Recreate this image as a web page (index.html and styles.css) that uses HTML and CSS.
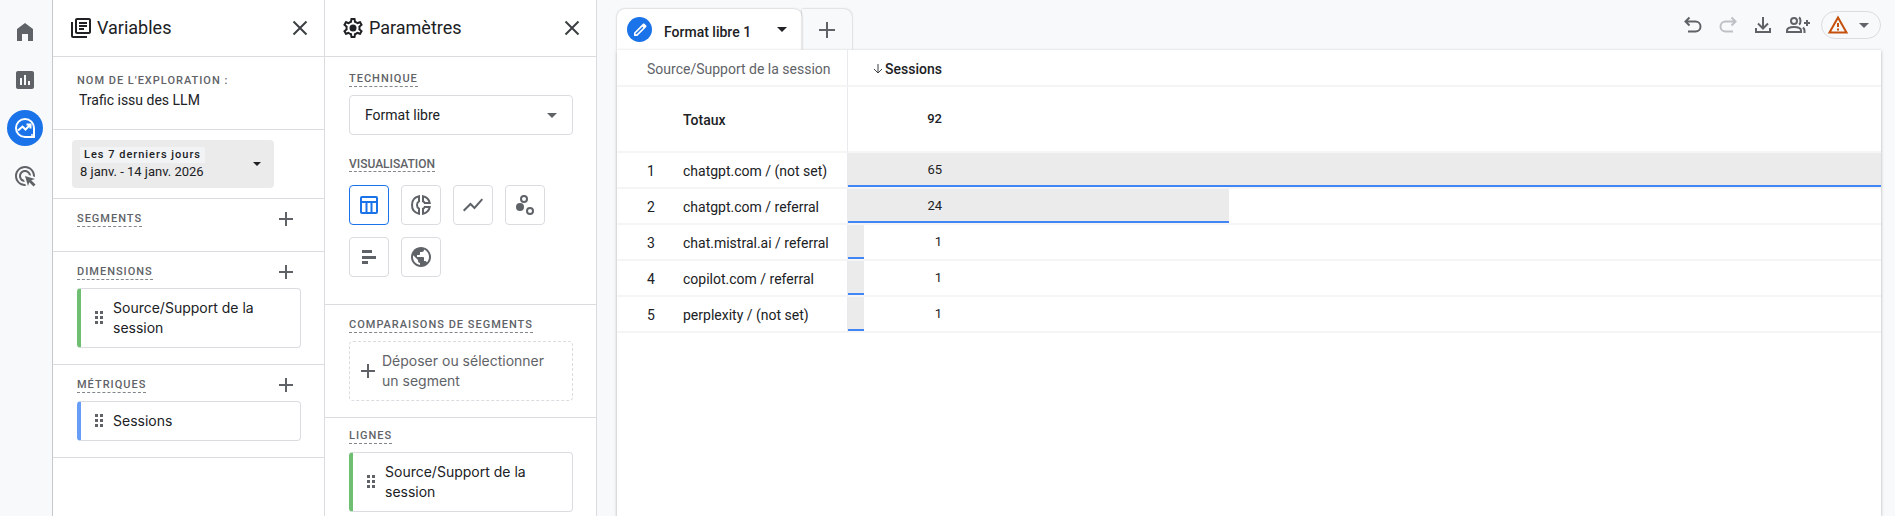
FILE: index.html
```html
<!DOCTYPE html>
<html lang="fr">
  <head>
    <meta charset="UTF-8" />
    <meta name="viewport" content="width=device-width, initial-scale=1.0" />
    <title>Trafic issu des LLM</title>
    <link rel="stylesheet" href="styles.css">
  </head>
  <body>
    <nav class="rail">
      <a href="#" class="rail-link" aria-label="Accueil">
        <svg class="icon" viewBox="0 0 24 24"><path d="M4 21V9l8-6 8 6v12h-5v-7H9v7z"/></svg>
      </a>
      <a href="#" class="rail-link" aria-label="Rapports">
        <svg class="icon" viewBox="0 0 24 24"><path d="M19 3H5c-1.1 0-2 .9-2 2v14c0 1.1.9 2 2 2h14c1.1 0 2-.9 2-2V5c0-1.1-.9-2-2-2zM9 17H7v-7h2v7zm4 0h-2V7h2v10zm4 0h-2v-4h2v4z"/></svg>
      </a>
      <a href="#" class="rail-link active" aria-label="Explorer">
        <svg class="icon line" viewBox="0 0 24 24"><path d="M12 3a9 9 0 1 0 0 18h9v-9a9 9 0 0 0-9-9z"/><path d="M5 14.500l4.500-4 3 3L17 9M13.500 8.500H17.500V12.500"/><circle class="solid" cx="19" cy="19" r="1"/></svg>
      </a>
      <a href="#" class="rail-link" aria-label="Publicité">
        <svg class="icon" viewBox="0 0 24 24"><path d="M11.710 17.990C8.530 17.840 6 15.220 6 12c0-3.310 2.690-6 6-6 3.220 0 5.840 2.530 5.990 5.710l-2.100-.63C15.480 9.310 13.890 8 12 8c-2.210 0-4 1.790-4 4 0 1.890 1.310 3.480 3.080 3.890l.63 2.100zM22 12c0 .3-.01.6-.04.9l-1.970-.59c.01-.1.01-.21.01-.31 0-4.420-3.580-8-8-8s-8 3.580-8 8 3.580 8 8 8c.1 0 .21 0 .31-.01l.59 1.970c-.3.03-.6.04-.9.04C6.480 22 2 17.520 2 12S6.480 2 12 2s10 4.480 10 10zm-3.770 4.260L22 15l-10-3 3 10 1.260-3.770 4.270 4.270 1.980-1.980-4.280-4.260z"/></svg>
      </a>
    </nav>

    <aside class="panel">
      <header class="panel-header">
        <svg class="icon" viewBox="0 0 24 24"><path d="M4 6H2v14c0 1.100.9 2 2 2h14v-2H4V6zm16-4H8c-1.100 0-2 .9-2 2v12c0 1.100.9 2 2 2h12c1.100 0 2-.9 2-2V4c0-1.100-.9-2-2-2zm0 14H8V4h12v12zM10 9h8v2h-8zm0 3h5v2h-5zm0-6h8v2h-8z"/></svg>
        <h2>Variables</h2>
        <button class="icon-btn" aria-label="Fermer Variables">
          <svg class="icon line" viewBox="0 0 24 24"><path d="M5.500 5.500l13 13M18.500 5.500l-13 13"/></svg>
        </button>
      </header>

      <section class="section name-section">
        <label class="label plain" for="name">Nom de l'exploration :</label>
        <input class="name-input" id="name" type="text" value="Trafic issu des LLM">
      </section>

      <section class="section date-section">
        <button class="date-picker">
          <span>
            <span class="date-preset">Les 7 derniers jours</span>
            <span class="date-range">8 janv. - 14 janv. 2026</span>
          </span>
          <span class="caret small"></span>
        </button>
      </section>

      <section class="section">
        <div class="section-header">
          <h3 class="label">Segments</h3>
          <button class="icon-btn" aria-label="Ajouter un segment">
            <svg class="icon line" viewBox="0 0 24 24"><path d="M12 5v14M5 12h14"/></svg>
          </button>
        </div>
      </section>

      <section class="section">
        <div class="section-header">
          <h3 class="label">Dimensions</h3>
          <button class="icon-btn" aria-label="Ajouter une dimension">
            <svg class="icon line" viewBox="0 0 24 24"><path d="M12 5v14M5 12h14"/></svg>
          </button>
        </div>
        <div class="chip dimension">
          <svg class="grip" viewBox="0 0 8 14"><path d="M0 0h3v3H0zM5 0h3v3H5zM0 5h3v3H0zM5 5h3v3H5zM0 10h3v3H0zM5 10h3v3H5z"/></svg>
          <span>Source/Support de la session</span>
        </div>
      </section>

      <section class="section">
        <div class="section-header">
          <h3 class="label">Métriques</h3>
          <button class="icon-btn" aria-label="Ajouter une métrique">
            <svg class="icon line" viewBox="0 0 24 24"><path d="M12 5v14M5 12h14"/></svg>
          </button>
        </div>
        <div class="chip metric">
          <svg class="grip" viewBox="0 0 8 14"><path d="M0 0h3v3H0zM5 0h3v3H5zM0 5h3v3H0zM5 5h3v3H5zM0 10h3v3H0zM5 10h3v3H5z"/></svg>
          <span>Sessions</span>
        </div>
      </section>
    </aside>

    <aside class="panel">
      <header class="panel-header">
        <svg class="icon" viewBox="0 0 24 24"><path d="M19.430 12.980c.04-.32.07-.64.07-.98 0-.34-.03-.66-.07-.98l2.110-1.650c.19-.15.24-.42.12-.64l-2-3.460c-.09-.16-.26-.25-.44-.25-.06 0-.12.01-.17.03l-2.490 1c-.52-.4-1.080-.73-1.690-.98l-.38-2.650C14.460 2.180 14.250 2 14 2h-4c-.25 0-.46.18-.49.42l-.38 2.650c-.61.25-1.170.59-1.690.98l-2.490-1c-.06-.02-.12-.03-.18-.03-.17 0-.34.09-.43.25l-2 3.460c-.13.22-.07.49.12.64l2.110 1.650c-.04.32-.07.65-.07.98 0 .33.03.66.07.98l-2.110 1.650c-.19.15-.24.42-.12.64l2 3.460c.09.16.26.25.44.25.06 0 .12-.01.17-.03l2.490-1c.52.4 1.080.73 1.690.98l.38 2.650c.03.24.24.42.49.42h4c.25 0 .46-.18.49-.42l.38-2.650c.61-.25 1.170-.59 1.690-.98l2.490 1c.06.02.12.03.18.03.17 0 .34-.09.43-.25l2-3.460c.12-.22.07-.49-.12-.64l-2.110-1.650zm-1.980-1.710c.04.31.05.52.05.73 0 .21-.02.43-.05.73l-.14 1.130.89.7 1.080.84-.7 1.210-1.270-.51-1.040-.42-.9.68c-.43.32-.84.56-1.250.73l-1.060.43-.16 1.130-.2 1.350h-1.400l-.19-1.350-.16-1.130-1.060-.43c-.43-.18-.83-.41-1.230-.71l-.91-.7-1.060.43-1.270.51-.7-1.210 1.080-.84.89-.7-.14-1.130c-.03-.31-.05-.54-.05-.74s.02-.43.05-.73l.14-1.130-.89-.7-1.080-.84.7-1.210 1.270.51 1.040.42.9-.68c.43-.32.84-.56 1.250-.73l1.060-.43.16-1.130.2-1.350h1.390l.19 1.350.16 1.130 1.060.43c.43.18.83.41 1.230.71l.91.7 1.060-.43 1.270-.51.7 1.210-1.070.85-.89.7.14 1.130z"/><circle cx="12" cy="12" r="3.500"/></svg>
        <h2>Paramètres</h2>
        <button class="icon-btn" aria-label="Fermer Paramètres">
          <svg class="icon line" viewBox="0 0 24 24"><path d="M5.500 5.500l13 13M18.500 5.500l-13 13"/></svg>
        </button>
      </header>

      <section class="section settings">
        <div class="section-header">
          <label class="label" for="technique">Technique</label>
        </div>
        <div class="select-wrap">
          <select id="technique">
            <option>Format libre</option>
          </select>
          <span class="caret"></span>
        </div>
        <div class="section-header visual-header">
          <h3 class="label tight">Visualisation</h3>
        </div>
        <div class="tiles">
          <button class="tile selected" aria-label="Tableau">
            <svg class="icon line" viewBox="0 0 24 24"><rect x="4" y="4" width="16" height="16" rx="1"/><path d="M4 9h16M9.500 9v11M14.500 9v11"/></svg>
          </button>
          <button class="tile" aria-label="Graphique en anneau">
            <svg class="icon line" viewBox="0 0 24 24"><path d="M10 3.300v5c-1.500.7-2 2-2 3.700s.5 3 2 3.700v5C6 19.900 3 16.700 3 12s3-7.900 7-8.700zM14 3.300c3.600.7 6 3.200 6.700 6.700h-5c-.3-.8-.9-1.400-1.700-1.700zM14 20.700c3.600-.7 6-3.200 6.700-6.700h-5c-.3.8-.9 1.400-1.700 1.700z"/></svg>
          </button>
          <button class="tile" aria-label="Graphique en courbes">
            <svg class="icon line" viewBox="0 0 24 24"><path d="M2.700 17.800l6.800-6.800 4 4 7.800-8.800"/></svg>
          </button>
          <button class="tile" aria-label="Nuage de points">
            <svg class="icon line" viewBox="0 0 24 24"><circle cx="11" cy="6" r="3"/><circle cx="17" cy="18" r="3"/><circle class="solid" cx="7" cy="14" r="4"/></svg>
          </button>
          <button class="tile" aria-label="Graphique à barres">
            <svg class="icon" viewBox="0 0 24 24"><path d="M5 5h10v3H5zM5 11h14v3H5zM5 16h6v3H5z"/></svg>
          </button>
          <button class="tile" aria-label="Carte géographique">
            <svg class="icon" viewBox="0 0 24 24"><path d="M12 2C6.480 2 2 6.480 2 12s4.480 10 10 10 10-4.480 10-10S17.520 2 12 2zm-1 17.930c-3.950-.49-7-3.850-7-7.930 0-.62.08-1.210.21-1.790L9 15v1c0 1.100.9 2 2 2v1.930zm6.900-2.540c-.26-.81-1-1.390-1.900-1.390h-1v-3c0-.55-.45-1-1-1H8v-2h2c.55 0 1-.45 1-1V7h2c1.100 0 2-.9 2-2v-.41c2.930 1.190 5 4.060 5 7.410 0 2.080-.8 3.970-2.100 5.390z"/></svg>
          </button>
        </div>
      </section>

      <section class="section">
        <div class="section-header">
          <h3 class="label">Comparaisons de segments</h3>
        </div>
        <button class="drop-zone">
          <svg class="icon line" viewBox="0 0 24 24"><path d="M12 5v14M5 12h14"/></svg>
          <span>Déposer ou sélectionner un segment</span>
        </button>
      </section>

      <section class="section rows-section">
        <div class="section-header">
          <h3 class="label">Lignes</h3>
        </div>
        <div class="chip dimension">
          <svg class="grip" viewBox="0 0 8 14"><path d="M0 0h3v3H0zM5 0h3v3H5zM0 5h3v3H0zM5 5h3v3H5zM0 10h3v3H0zM5 10h3v3H5z"/></svg>
          <span>Source/Support de la session</span>
        </div>
      </section>
    </aside>

    <main class="main">
      <div class="topbar">
        <button class="tab">
          <span class="tab-badge">
            <svg class="icon" viewBox="0 0 24 24"><path d="M3 21v-5L16 3c1-1 2-1 3 0l2 2c1 1 1 2 0 3L8 21zM5.500 18.500h1.500L17 8.500 15.500 7l-10 10z" fill-rule="evenodd"/></svg>
          </span>
          <span class="tab-name">Format libre 1</span>
          <span class="caret dark"></span>
        </button>
        <button class="tab-add" aria-label="Ajouter un onglet">
          <svg class="icon line" viewBox="0 0 24 24"><path d="M12 4v16M4 12h16"/></svg>
        </button>
        <div class="toolbar">
          <button class="icon-btn" aria-label="Annuler">
            <svg class="icon line" viewBox="0 0 24 24"><path d="M8.500 4.500l-4 4 4 4M5 8.500h9.500a5 5 0 0 1 0 10H7"/></svg>
          </button>
          <button class="icon-btn" aria-label="Rétablir" disabled>
            <svg class="icon line" viewBox="0 0 24 24"><path d="M15.500 4.500l4 4-4 4M19 8.500H9.500a5 5 0 0 0 0 10H17"/></svg>
          </button>
          <button class="icon-btn" aria-label="Télécharger">
            <svg class="icon line" viewBox="0 0 24 24"><path d="M12 4v11M7 10.500l5 5 5-5M5 15v4h14v-4"/></svg>
          </button>
          <button class="icon-btn" aria-label="Partager">
            <svg class="icon line" viewBox="0 0 24 24"><circle cx="8" cy="8" r="3"/><path d="M1 19v-1.500c0-2.500 4-3.500 7-3.500s7 1 7 3.500V19zM13 4.500c2 1 2 6 0 7M18.500 20v-2.500c0-1-.5-2-1.500-3M21 7v6M18 10h6"/></svg>
          </button>
          <button class="alert-btn" aria-label="Avertissements">
            <svg class="icon line" viewBox="0 0 24 24"><path d="M12 4.500L20.500 19.500h-17zM12 10v4M12 15.500v2"/></svg>
            <span class="caret"></span>
          </button>
        </div>
      </div>

      <div class="canvas">
        <table>
          <colgroup>
            <col class="col-rank">
            <col class="col-name">
            <col>
          </colgroup>
          <thead>
            <tr>
              <th class="dim-head" colspan="2">Source/Support de la session</th>
              <th class="metric-cell">
                <span class="value metric-head"><svg viewBox="0 0 10 10"><path d="M5 0v8M1 5l4 4 4-4"/></svg>Sessions</span>
              </th>
            </tr>
          </thead>
          <tbody>
            <tr class="totals">
              <td class="rank"></td>
              <td class="name">Totaux</td>
              <td class="metric-cell"><span class="value">92</span></td>
            </tr>
            <tr>
              <td class="rank">1</td>
              <td class="name">chatgpt.com / (not set)</td>
              <td class="metric-cell"><div class="bar" style="width: 100%"><span class="value">65</span></div></td>
            </tr>
            <tr>
              <td class="rank">2</td>
              <td class="name">chatgpt.com / referral</td>
              <td class="metric-cell"><div class="bar" style="width: 36.9%"><span class="value">24</span></div></td>
            </tr>
            <tr>
              <td class="rank">3</td>
              <td class="name">chat.mistral.ai / referral</td>
              <td class="metric-cell"><div class="bar" style="width: 1.5%"><span class="value">1</span></div></td>
            </tr>
            <tr>
              <td class="rank">4</td>
              <td class="name">copilot.com / referral</td>
              <td class="metric-cell"><div class="bar" style="width: 1.5%"><span class="value">1</span></div></td>
            </tr>
            <tr>
              <td class="rank">5</td>
              <td class="name">perplexity / (not set)</td>
              <td class="metric-cell"><div class="bar" style="width: 1.5%"><span class="value">1</span></div></td>
            </tr>
          </tbody>
        </table>
      </div>
    </main>
  </body>
</html>
```

FILE: styles.css
```css
* {
  box-sizing: border-box;
}

body {
  display: flex;
  height: 100vh;
  margin: 0;
  overflow: hidden;
  background-color: #f8f9fa;
  color: #202124;
  font-family: Roboto, Arial, sans-serif;
  font-size: 14px;
  line-height: 20px;
}

h2,
h3 {
  margin: 0;
}

button,
input,
select {
  margin: 0;
  padding: 0;
  border: none;
  background: none;
  color: inherit;
  font: inherit;
  text-align: left;
}

button {
  cursor: pointer;
}

/* Icons */
.icon {
  display: block;
  flex: none;
  width: 24px;
  height: 24px;
  fill: currentColor;
}

.line {
  fill: none;
  stroke: currentColor;
  stroke-width: 2;
}

.line .solid {
  fill: currentColor;
  stroke: none;
}

.icon-btn {
  flex: none;
  width: 24px;
  height: 24px;
  color: #5f6368;
}

.caret {
  flex: none;
  border: 5px solid transparent;
  border-top-color: #5f6368;
  border-bottom: none;
}

.caret.dark {
  border-top-color: #202124;
}

.caret.small {
  border-width: 4px 4px 0;
  border-top-color: #202124;
}

/* Left navigation */
.rail {
  display: flex;
  flex: none;
  flex-direction: column;
  gap: 12px;
  width: 53px;
  padding: 14px 9px 14px 7px;
  border-right: 1px solid #c6c9cc;
}

.rail-link {
  display: flex;
  align-items: center;
  justify-content: center;
  width: 36px;
  height: 36px;
  border-radius: 50%;
  color: #5f6368;
}

.rail-link.active {
  background-color: #1a73e8;
  color: white;
}

/* Panels */
.panel {
  flex: none;
  width: 272px;
  overflow: hidden;
  border-right: 1px solid #dadce0;
  background-color: white;
}

.panel-header {
  display: flex;
  align-items: center;
  gap: 4px;
  height: 57px;
  padding: 0 12px 0 16px;
  border-bottom: 1px solid #dadce0;
}

.panel-header h2 {
  flex: 1;
  font-size: 18px;
  font-weight: 400;
}

.panel-header .icon-btn {
  color: #3c4043;
}

.section {
  padding: 11px 23px 16px 24px;
  border-bottom: 1px solid #dadce0;
}

.section-header {
  display: flex;
  align-items: center;
  justify-content: space-between;
  height: 17px;
  margin-bottom: 8px;
}

.section-header .icon-btn {
  margin-right: 3px;
}

.label {
  padding-top: 2px;
  border-bottom: 1px dashed #80868b;
  color: #5f6368;
  font-size: 11px;
  font-weight: 500;
  letter-spacing: 1px;
  line-height: 14px;
  text-transform: uppercase;
  white-space: nowrap;
}

.label.plain {
  display: block;
  border: none;
}

.name-section {
  padding-top: 15px;
  padding-bottom: 18px;
}

.name-input {
  display: block;
  width: 100%;
  height: 23px;
  padding: 1px 0 0 2px;
}

.date-section {
  padding: 10px 19px;
}

.date-picker {
  display: flex;
  align-items: center;
  justify-content: space-between;
  width: 202px;
  height: 48px;
  padding: 0 13px 0 8px;
  border-radius: 4px;
  background-color: #ebebeb;
}

.date-preset {
  display: block;
  padding: 0 4px;
  background-color: #f1f3f4;
  font-size: 11px;
  font-weight: 500;
  letter-spacing: 1px;
  line-height: 16px;
}

.date-range {
  display: block;
  font-size: 13px;
  line-height: 18px;
}

.chip {
  display: flex;
  align-items: center;
  gap: 10px;
  padding: 9px 17px 9px 14px;
  border: 1px solid #dadce0;
  border-left: 4px solid #6fbf73;
  border-radius: 4px;
}

.chip,
.drop-zone {
  font-family: Inter, Roboto, sans-serif;
}

.chip.metric {
  border-left-color: #669df6;
}

.grip {
  flex: none;
  width: 8px;
  height: 14px;
  fill: #5f6368;
}

.rows-section {
  padding-top: 9px;
}

.settings {
  padding-top: 13px;
  padding-bottom: 27px;
}

.select-wrap {
  display: flex;
  align-items: center;
  height: 40px;
  padding-right: 15px;
  border: 1px solid #dadce0;
  border-radius: 4px;
}

.select-wrap select {
  flex: 1;
  height: 38px;
  padding-left: 15px;
  appearance: none;
}

.visual-header {
  margin: 20px 0 13px;
}

.label.tight {
  font-size: 12px;
  letter-spacing: normal;
}

.tiles {
  display: flex;
  flex-wrap: wrap;
  gap: 12px;
}

.tile {
  display: flex;
  align-items: center;
  justify-content: center;
  width: 40px;
  height: 40px;
  border: 1px solid #dadce0;
  border-radius: 4px;
  color: #5f6368;
}

.tile.selected {
  border-color: #1a73e8;
  color: #1a73e8;
}

.drop-zone {
  display: flex;
  align-items: center;
  gap: 2px;
  width: 100%;
  padding: 9px 20px 9px 6px;
  border: 1px dashed #dadce0;
  border-radius: 4px;
  color: #5f6368;
}

/* Exploration */
.main {
  display: flex;
  flex: 1;
  flex-direction: column;
  min-width: 0;
  padding: 0 14px 0 20px;
}

.topbar {
  display: flex;
  flex: none;
  height: 50px;
  padding-top: 9px;
}

.tab {
  display: flex;
  align-items: center;
  width: 185px;
  padding: 0 15px 0 10px;
  border-radius: 8px 8px 0 0;
  background-color: white;
  box-shadow: 0 0 2px rgba(60, 64, 67, 0.4);
}

.tab-badge {
  display: flex;
  align-items: center;
  justify-content: center;
  width: 25px;
  height: 25px;
  margin-right: 12px;
  border-radius: 50%;
  background-color: #1a73e8;
  color: white;
}

.tab-badge .icon {
  width: 16px;
  height: 16px;
}

.tab-name {
  flex: 1;
  padding-top: 4px;
  font-weight: 500;
}

.tab-add {
  display: flex;
  align-items: center;
  justify-content: center;
  width: 50px;
  border-radius: 0 8px 0 0;
  box-shadow: 0 0 2px rgba(60, 64, 67, 0.4);
  color: #5f6368;
}

.toolbar {
  display: flex;
  align-items: center;
  gap: 11px;
  height: 32px;
  margin-left: auto;
}

.toolbar .icon-btn:disabled {
  color: #bdc1c6;
}

.alert-btn {
  display: flex;
  align-items: center;
  gap: 9px;
  width: 60px;
  height: 28px;
  padding-left: 4px;
  border: 1px solid #dadce0;
  border-radius: 14px;
  color: #c5500c;
}

.canvas {
  position: relative;
  flex: 1;
  background-color: white;
  box-shadow: 0 1px 3px rgba(60, 64, 67, 0.4);
}

table {
  width: 100%;
  border-collapse: separate;
  border-spacing: 0;
  table-layout: fixed;
}

.col-rank {
  width: 66px;
}

.col-name {
  width: 165px;
}

th,
td {
  height: 36px;
  padding: 2px 0 0;
  border-bottom: 2px solid #f5f5f5;
  text-align: left;
}

th {
  height: 37px;
}

td.metric-cell {
  padding: 0;
}

.dim-head {
  padding-left: 30px;
  border-right: 1px solid #e8eaed;
  color: #5f6368;
  font-weight: 400;
}

.rank {
  padding-left: 30px;
}

.name {
  border-right: 1px solid #e8eaed;
  white-space: nowrap;
}

.totals td {
  height: 66px;
  font-weight: 500;
}

.value {
  display: block;
  width: 94px;
  font-size: 13px;
  text-align: right;
  white-space: nowrap;
}

.metric-head {
  font-size: 14px;
  font-weight: 500;
}

.metric-head svg {
  width: 10px;
  height: 10px;
  margin-right: 2px;
  fill: none;
  stroke: #3c4043;
}

.bar {
  height: 34px;
  padding-top: 7px;
  border-bottom: 2px solid #4285f4;
  background-color: #ebebeb;
}
```
